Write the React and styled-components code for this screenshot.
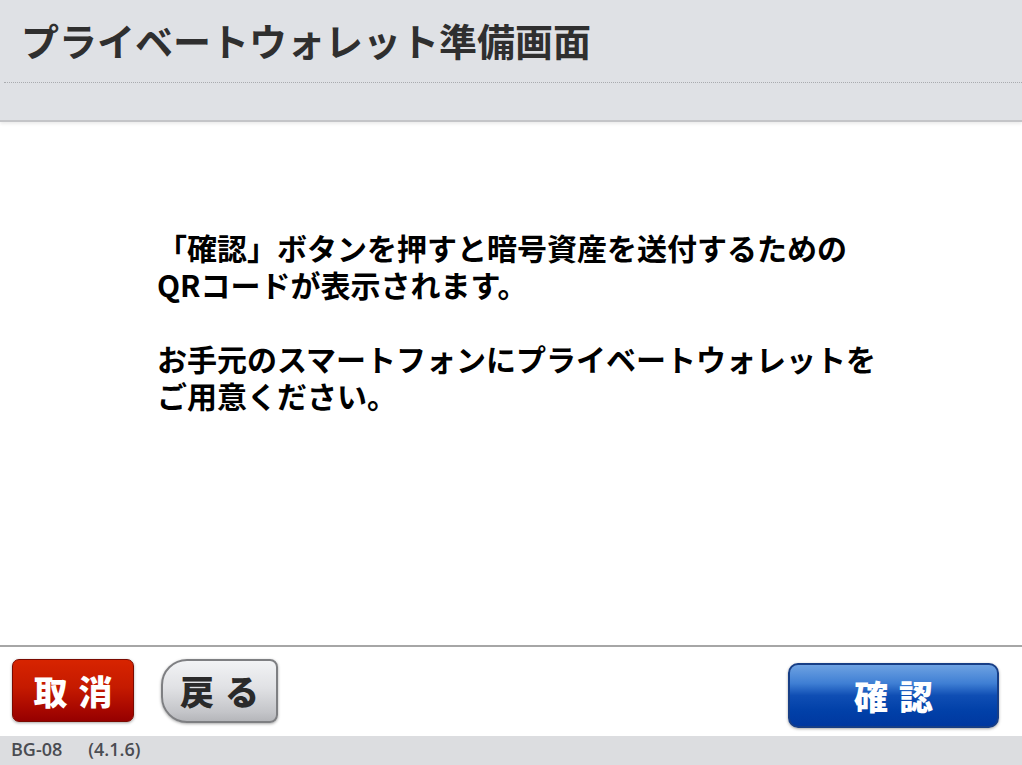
import React from 'react';
import styled, { createGlobalStyle } from 'styled-components';

const Global = createGlobalStyle`
  html, body { margin: 0; padding: 0; }
  *, *::before, *::after { box-sizing: border-box; }
  body {
    font-family: "Noto Sans CJK JP", "Noto Sans", sans-serif;
    background: #fff;
  }
`;

const Screen = styled.div`
  width: 1022px;
  height: 765px;
  display: flex;
  flex-direction: column;
  overflow: hidden;
`;

const Header = styled.header`
  height: 122px;
  background: #dfe1e5;
  border-bottom: 2px solid #c4c5c8;
  box-shadow: 0 2px 3px rgba(0, 0, 0, 0.08);
  padding: 0 0 0 4px;
  display: flex;
  flex-direction: column;
  flex-shrink: 0;
`;

const Title = styled.h1`
  margin: 0;
  padding: 14px 0 0 17px;
  height: 83px;
  font-size: 38px;
  line-height: 52px;
  font-weight: 700;
  color: #2f2f2f;
  border-bottom: 1px dotted #a9abaf;
`;

const Body = styled.main`
  flex: 1;
  padding: 107px 0 0 157px;
`;

const Para = styled.p`
  margin: 0 0 37px;
  font-size: 30px;
  line-height: 37px;
  font-weight: 700;
  color: #000;
`;

const ActionBar = styled.div`
  height: 91px;
  border-top: 2px solid #a6a6a6;
  display: flex;
  align-items: center;
  padding: 0 23px 0 12px;
  gap: 27px;
  flex-shrink: 0;
`;

const Button = styled.button`
  font-family: "Noto Sans CJK JP", sans-serif;
  font-size: 34px;
  font-weight: 900;
  letter-spacing: 11px;
  padding: 0 0 0 11px;
  cursor: pointer;
  display: flex;
  align-items: center;
  justify-content: center;
  box-shadow: 0 1px 3px rgba(0, 0, 0, 0.35);
`;

const CancelButton = styled(Button)`
  width: 122px;
  height: 63px;
  margin-top: -2px;
  color: #fff;
  border: 1px solid #7a0a00;
  border-radius: 7px;
  background: linear-gradient(#d72400 0%, #c51a00 45%, #a80800 80%, #960000 100%);
`;

const BackButton = styled(Button)`
  width: 117px;
  height: 64px;
  margin-top: -2px;
  color: #2a2a2a;
  border: 2px solid #7e7f82;
  border-radius: 26px 8px 8px 26px;
  background: linear-gradient(#f2f3f5 0%, #e0e1e4 45%, #c4c5c9 85%, #b5b6ba 100%);
`;

const ConfirmButton = styled(Button)`
  margin-left: auto;
  margin-top: 8px;
  width: 211px;
  height: 65px;
  color: #fff;
  border: 2px solid #173e86;
  border-radius: 10px;
  background: linear-gradient(#6ea2e2 0%, #3f7fd4 30%, #0f4eb4 50%, #0140a8 75%, #0038a0 100%);
`;

const StatusBar = styled.footer`
  height: 29px;
  background: #dcdde0;
  display: flex;
  align-items: center;
  padding: 0 0 3px 11px;
  gap: 26px;
  font-family: "Open Sans", "Noto Sans", sans-serif;
  font-size: 18px;
  font-weight: 600;
  color: #4a4c52;
  flex-shrink: 0;
`;

export default function App() {
  return (
    <Screen>
      <Global />
      <Header>
        <Title>プライベートウォレット準備画面</Title>
      </Header>
      <Body>
        <Para>
          「確認」ボタンを押すと暗号資産を送付するための
          <br />
          QRコードが表示されます。
        </Para>
        <Para>
          お手元のスマートフォンにプライベートウォレットを
          <br />
          ご用意ください。
        </Para>
      </Body>
      <ActionBar>
        <CancelButton>取消</CancelButton>
        <BackButton>戻る</BackButton>
        <ConfirmButton>確認</ConfirmButton>
      </ActionBar>
      <StatusBar>
        <span>BG-08</span>
        <span>(4.1.6)</span>
      </StatusBar>
    </Screen>
  );
}
